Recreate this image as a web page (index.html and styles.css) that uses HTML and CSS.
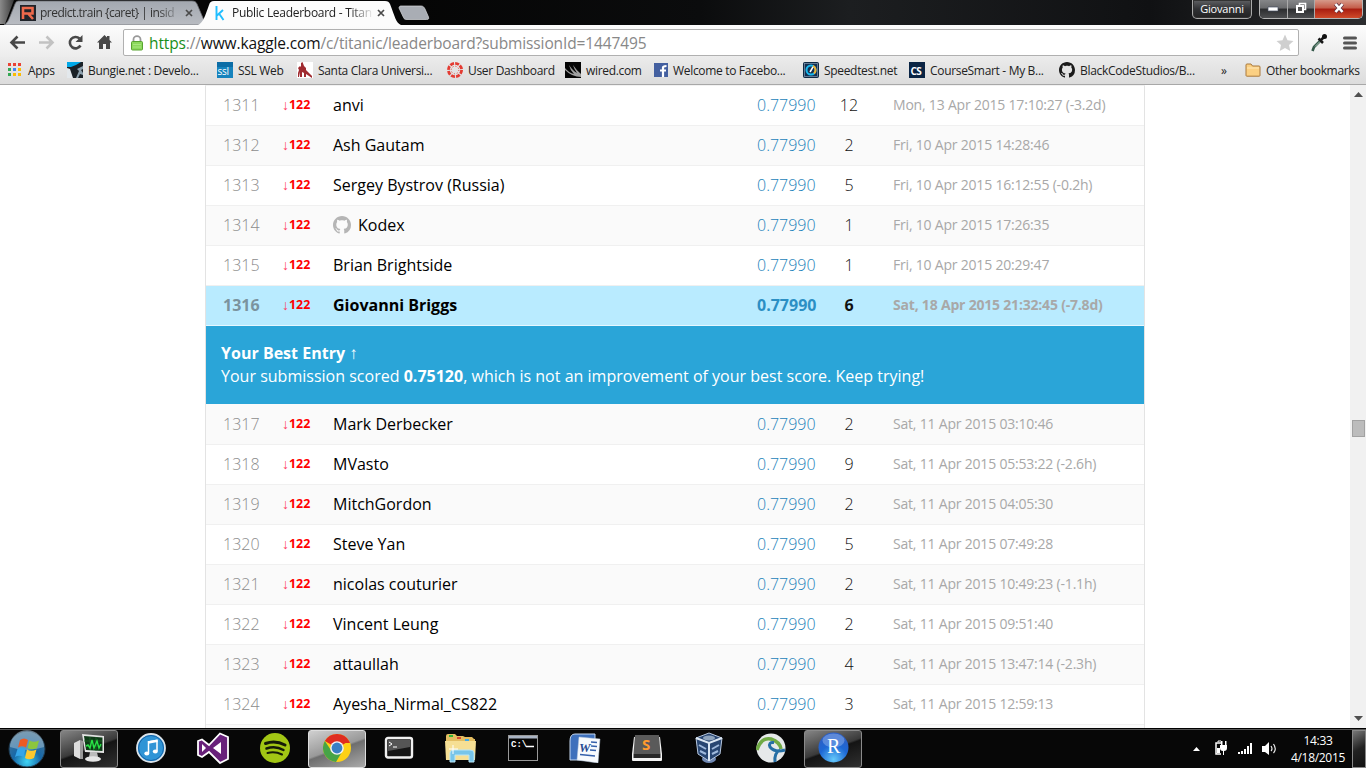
FILE: index.html
```
<!DOCTYPE html>
<html lang="en">
<head>
<meta charset="utf-8">
<title>Public Leaderboard - Titanic</title>
<link rel="stylesheet" href="styles.css">
</head>
<body>
<div class="screen">
<header class="tabstrip">
  <svg class="tabs-art" width="440" height="25" viewBox="0 0 440 25">
    <defs>
      <linearGradient id="tabg" x1="0" y1="0" x2="0" y2="1"><stop offset="0" stop-color="#a3a8b0"/><stop offset="1" stop-color="#b9bcc2"/></linearGradient>
      <linearGradient id="edge" x1="0" y1="0" x2="1" y2="0"><stop offset="0" stop-color="#8a8a8a"/><stop offset="1" stop-color="#3a3a3a"/></linearGradient>
    </defs>
    <path d="M0 0H14L5 24H0z" fill="url(#edge)"/>
    <path d="M4 25C8 23 9 19 15 4C16 1.500 17 1 20 1H192C195 1 196 2 197 4L206 25z" fill="url(#tabg)" stroke="#6d6f73" stroke-width=".8"/>
    <path d="M399 8C399 6.500 400 6 401 6H421C423 6 424 7 425 9L428.500 17C429 19 428.500 19.500 426.500 19.500H407C405 19.500 404 19 403.500 17.500z" fill="#a9adb4" stroke="#d9dadc" stroke-width=".7"/>
    <path d="M198 25C203 23 205 16 209 5C210 2 211 1 214 1H385C388 1 389 2 390 4C395 17 396 23 401 25z" fill="#fcfcfc"/>
  </svg>
  <div class="tab tab-idle">
    <svg width="16" height="16" viewBox="0 0 16 16"><rect width="16" height="16" fill="#20242a"/><path d="M3 14V3H12.500V8.500H3M8.500 9L13 14" fill="none" stroke="#ee6a4c" stroke-width="2.600"/></svg>
    <span class="tab-title">predict.train {caret} | insid</span><svg class="close" width="8" height="8" viewBox="0 0 8 8"><path d="M1 1L7 7M7 1L1 7" stroke="#4a4a4a" stroke-width="1.700"/></svg>
  </div>
  <div class="tab tab-active">
    <svg width="16" height="16" viewBox="0 0 16 16"><path d="M4.500 1V15M11 5L5 10.500M7 8.500L11.500 15" fill="none" stroke="#20beff" stroke-width="1.900"/></svg>
    <span class="tab-title">Public Leaderboard - Titan</span><svg class="close" width="8" height="8" viewBox="0 0 8 8"><path d="M1 1L7 7M7 1L1 7" stroke="#4a4a4a" stroke-width="1.700"/></svg>
  </div>
  <div class="window-buttons">
    <div class="user-button">Giovanni</div>
    <div class="controls">
      <div class="wb"><svg width="12" height="12"><rect x="1" y="5" width="10" height="4" rx=".5" fill="#fff" stroke="#444a60" stroke-width=".7"/></svg></div>
      <div class="wb"><svg width="12" height="12"><path d="M4.500 3V1.500H10.500V7.500H9" fill="none" stroke="#fff" stroke-width="1.600"/><rect x="2" y="4" width="6" height="6" fill="#555" stroke="#fff" stroke-width="2"/></svg></div>
      <div class="wb wb-close"><svg width="14" height="12"><path d="M3.500 2L10.500 10M10.500 2L3.500 10" stroke="#5a3040" stroke-width="4"/><path d="M3.500 2L10.500 10M10.500 2L3.500 10" stroke="#fff" stroke-width="2.600"/></svg></div>
    </div>
  </div>
</header>
<div class="toolbar">
  <svg class="nav" width="112" height="32" viewBox="0 0 112 32">
    <g fill="none" stroke-width="2.600">
      <path d="M25 17.500H12M17.500 11.500L11.500 17.500L17.500 23.500" stroke="#484848"/>
      <path d="M39 17.500H52M46.500 11.500L52.500 17.500L46.500 23.500" stroke="#c2c2c2"/>
      <path d="M80.500 20.500A5.700 5.700 0 1 1 79.500 13.500" stroke="#484848"/>
    </g>
    <path d="M82.500 10V17H75.500z" fill="#484848"/>
    <path d="M97 17.500L104.500 10L107 12.500V11H109.500V15L112 17.500H110V24H106V19H103V24H99V17.500z" fill="#484848"/>
  </svg>
  <div class="omnibox">
    <svg width="14" height="16" viewBox="0 0 14 16"><path d="M3.500 7V4.500A3.500 3.300 0 0 1 10.500 4.500V7" fill="none" stroke="#999" stroke-width="1.800"/><rect x="1.500" y="6.500" width="11" height="8.500" rx="1" fill="#8cd85c" stroke="#58a331"/><path d="M3 9.500H11M3 12H11" stroke="#a8e780"/></svg>
    <span class="url"><span class="scheme">https</span>://<span class="host">www.kaggle.com</span>/c/titanic/leaderboard?submissionId=1447495</span>
    <svg class="star" width="18" height="18" viewBox="0 0 18 18"><path d="M9 .5L11.500 6.300L17.500 6.900L13 11L14.300 17L9 13.900L3.700 17L5 11L.5 6.900L6.500 6.300z" fill="#cfcfcf"/></svg>
  </div>
  <svg class="dropper" width="18" height="20" viewBox="0 0 18 20"><path d="M11 7L4 14L2.500 18" stroke="#35594a" stroke-width="2.600" fill="none"/><path d="M11 7.500L5 13.500" stroke="#a9c4b4" stroke-width="1"/><path d="M8.500 5.500L13 10M11 7L15 3" stroke="#181818" stroke-width="2.500"/><circle cx="14.500" cy="3.500" r="2.500" fill="#111"/></svg>
  <svg class="menu" width="14" height="14"><path d="M1.500 2H12.500M1.500 7H12.500M1.500 12H12.500" stroke="#555" stroke-width="3" stroke-linecap="round"/></svg>
</div>
<nav class="bookmarks">
  <div class="bm b1"><svg width="14" height="14"><g fill="#ea4335"><path d="M0 0h3v3H0zM5 0h3v3H5zM10 0h3v3h-3z"/></g><path d="M0 5h3v3H0z" fill="#34a853"/><path d="M5 5h3v3H5z" fill="#4285f4"/><path d="M10 5h3v3h-3zM5 10h3v3H5zM10 10h3v3h-3z" fill="#fbbc05"/><path d="M0 10h3v3H0z" fill="#34a853"/></svg><span>Apps</span></div>
  <div class="bm b2"><svg width="16" height="16"><rect width="16" height="16" fill="#1b2127"/><path d="M0 0H14L9 3L4 5H0z" fill="#00a8e8"/><path d="M0 6L3 7L6 16H0z" fill="#e3e8ec"/><path d="M9 16L12 9L10 7L16 4V7L14 8L16 11V13L13 12L11 16z" fill="#8da0ad"/></svg><span>Bungie.net : Develo...</span></div>
  <div class="bm b3"><svg width="16" height="16"><rect width="16" height="16" fill="#1683bd"/><rect width="16" height="5" fill="#0c6da6"/><text x="0.500" y="13" class="ssl">ssl</text></svg><span>SSL Web</span></div>
  <div class="bm b4"><svg width="16" height="16"><rect width="16" height="16" fill="#fff"/><path d="M1 6L3 4L4 5V1L5.500 0L7 4L9 6V8L11 10L15 14V16L9 12V15H7V11L5 10V15H3V10L2 15H1V11L2 8z" fill="#a02b30"/></svg><span>Santa Clara Universi...</span></div>
  <div class="bm b5"><svg width="16" height="16"><circle cx="8" cy="8" r="6.600" fill="none" stroke="#e43b32" stroke-width="2.800" stroke-dasharray="4 1.180"/><circle cx="8" cy="8" r="3.800" fill="none" stroke="#e43b32" stroke-width="1" stroke-dasharray="1 1.980"/></svg><span>User Dashboard</span></div>
  <div class="bm b6"><svg width="16" height="16"><rect width="16" height="16" fill="#050505"/><path d="M0 6Q4 11 9 12Q5 8 4 3Q8 9 12 11Q9 7 8 3Q12 9 16 12V15Q7 15 0 8z" fill="#a0a0a0"/></svg><span>wired.com</span></div>
  <div class="bm b7"><svg width="14" height="14"><rect width="14" height="14" fill="#4460a0"/><path d="M9 14V4.500Q9 3 12.500 3M6 7.500H12" fill="none" stroke="#fff" stroke-width="2.200"/></svg><span>Welcome to Facebo...</span></div>
  <div class="bm b8"><svg width="16" height="16"><rect x=".5" y=".5" width="15" height="15" rx="1" fill="#132f50" stroke="#0e2944"/><rect x="1.500" y="1.500" width="13" height="13" fill="none" stroke="#7890a8" stroke-width=".8"/><circle cx="8" cy="8" r="4.500" fill="none" stroke="#19b9ee" stroke-width="2"/><path d="M10 4A4.500 4.500 0 0 1 11 11.500" fill="none" stroke="#f4b02b" stroke-width="2"/><path d="M7 10L10 5" stroke="#fff" stroke-width="1.500"/></svg><span>Speedtest.net</span></div>
  <div class="bm b9"><svg width="16" height="16"><rect width="16" height="16" fill="#0b2545"/><text x="1.500" y="12.500" class="cs">CS</text></svg><span>CourseSmart - My B...</span></div>
  <div class="bm b10"><svg width="16" height="16" viewBox="0 0 16 16"><path class="gh-dark" d="M8 0C3.580 0 0 3.580 0 8c0 3.540 2.290 6.530 5.470 7.590.4.070.55-.17.55-.38 0-.19-.01-.82-.01-1.490-2.010.37-2.530-.49-2.690-.94-.09-.23-.48-.94-.82-1.130-.28-.15-.68-.52-.01-.53.63-.01 1.080.58 1.230.82.72 1.210 1.870.87 2.330.66.07-.52.28-.87.51-1.070-1.780-.2-3.640-.89-3.640-3.950 0-.87.31-1.590.82-2.150-.08-.2-.36-1.020.08-2.120 0 0 .67-.21 2.200.82.64-.18 1.320-.27 2-.27s1.360.09 2 .27c1.530-1.040 2.200-.82 2.200-.82.44 1.100.16 1.920.08 2.120.51.56.82 1.270.82 2.150 0 3.070-1.870 3.750-3.650 3.950.29.25.54.73.54 1.480 0 1.070-.01 1.930-.01 2.200 0 .21.15.46.55.38A8.010 8.010 0 0 0 16 8c0-4.420-3.580-8-8-8z"/></svg><span>BlackCodeStudios/B...</span></div>
  <div class="bm b11"><span>»</span></div>
  <div class="bm b12"><svg width="16" height="14"><path d="M1 12.500V2Q1 1 2 1H6L7.500 3H14Q15 3 15 4V12.500Q15 13.200 14 13.200H2Q1 13.200 1 12.500z" fill="#fbd083" stroke="#a9793c"/><path d="M2 5H14" stroke="#ffe8b8"/></svg><span>Other bookmarks</span></div>
</nav>
<main class="page">
  <div class="board">
    <div class="row"><span class="rank">1311</span><span class="delta"><i>↓</i>122</span><span class="name">anvi</span><span class="score">0.77990</span><span class="entries">12</span><span class="when">Mon, 13 Apr 2015 17:10:27 (-3.2d)</span></div>
    <div class="row alt"><span class="rank">1312</span><span class="delta"><i>↓</i>122</span><span class="name">Ash Gautam</span><span class="score">0.77990</span><span class="entries">2</span><span class="when">Fri, 10 Apr 2015 14:28:46</span></div>
    <div class="row"><span class="rank">1313</span><span class="delta"><i>↓</i>122</span><span class="name">Sergey Bystrov (Russia)</span><span class="score">0.77990</span><span class="entries">5</span><span class="when">Fri, 10 Apr 2015 16:12:55 (-0.2h)</span></div>
    <div class="row alt"><span class="rank">1314</span><span class="delta"><i>↓</i>122</span><span class="name"><svg class="gh" width="18" height="18" viewBox="0 0 16 16"><path d="M8 0C3.580 0 0 3.580 0 8c0 3.540 2.290 6.530 5.470 7.590.4.070.55-.17.55-.38 0-.19-.01-.82-.01-1.490-2.010.37-2.530-.49-2.690-.94-.09-.23-.48-.94-.82-1.130-.28-.15-.68-.52-.01-.53.63-.01 1.080.58 1.230.82.72 1.210 1.870.87 2.330.66.07-.52.28-.87.51-1.070-1.780-.2-3.640-.89-3.640-3.950 0-.87.31-1.590.82-2.150-.08-.2-.36-1.020.08-2.120 0 0 .67-.21 2.200.82.64-.18 1.320-.27 2-.27s1.360.09 2 .27c1.530-1.040 2.200-.82 2.200-.82.44 1.100.16 1.920.08 2.120.51.56.82 1.270.82 2.150 0 3.070-1.870 3.750-3.650 3.950.29.25.54.73.54 1.480 0 1.070-.01 1.930-.01 2.200 0 .21.15.46.55.38A8.010 8.010 0 0 0 16 8c0-4.420-3.580-8-8-8z"/></svg>Kodex</span><span class="score">0.77990</span><span class="entries">1</span><span class="when">Fri, 10 Apr 2015 17:26:35</span></div>
    <div class="row"><span class="rank">1315</span><span class="delta"><i>↓</i>122</span><span class="name">Brian Brightside</span><span class="score">0.77990</span><span class="entries">1</span><span class="when">Fri, 10 Apr 2015 20:29:47</span></div>
    <div class="row me"><span class="rank">1316</span><span class="delta"><i>↓</i>122</span><span class="name">Giovanni Briggs</span><span class="score">0.77990</span><span class="entries">6</span><span class="when">Sat, 18 Apr 2015 21:32:45 (-7.8d)</span></div>
    <div class="banner"><p><b>Your Best Entry <span class="up">↑</span></b></p><p>Your submission scored <b>0.75120</b>, which is not an improvement of your best score. Keep trying!</p></div>
    <div class="row alt"><span class="rank">1317</span><span class="delta"><i>↓</i>122</span><span class="name">Mark Derbecker</span><span class="score">0.77990</span><span class="entries">2</span><span class="when">Sat, 11 Apr 2015 03:10:46</span></div>
    <div class="row"><span class="rank">1318</span><span class="delta"><i>↓</i>122</span><span class="name">MVasto</span><span class="score">0.77990</span><span class="entries">9</span><span class="when">Sat, 11 Apr 2015 05:53:22 (-2.6h)</span></div>
    <div class="row alt"><span class="rank">1319</span><span class="delta"><i>↓</i>122</span><span class="name">MitchGordon</span><span class="score">0.77990</span><span class="entries">2</span><span class="when">Sat, 11 Apr 2015 04:05:30</span></div>
    <div class="row"><span class="rank">1320</span><span class="delta"><i>↓</i>122</span><span class="name">Steve Yan</span><span class="score">0.77990</span><span class="entries">5</span><span class="when">Sat, 11 Apr 2015 07:49:28</span></div>
    <div class="row alt"><span class="rank">1321</span><span class="delta"><i>↓</i>122</span><span class="name">nicolas couturier</span><span class="score">0.77990</span><span class="entries">2</span><span class="when">Sat, 11 Apr 2015 10:49:23 (-1.1h)</span></div>
    <div class="row"><span class="rank">1322</span><span class="delta"><i>↓</i>122</span><span class="name">Vincent Leung</span><span class="score">0.77990</span><span class="entries">2</span><span class="when">Sat, 11 Apr 2015 09:51:40</span></div>
    <div class="row alt"><span class="rank">1323</span><span class="delta"><i>↓</i>122</span><span class="name">attaullah</span><span class="score">0.77990</span><span class="entries">4</span><span class="when">Sat, 11 Apr 2015 13:47:14 (-2.3h)</span></div>
    <div class="row"><span class="rank">1324</span><span class="delta"><i>↓</i>122</span><span class="name">Ayesha_Nirmal_CS822</span><span class="score">0.77990</span><span class="entries">3</span><span class="when">Sat, 11 Apr 2015 12:59:13</span></div>
    <div class="row alt"></div>
  </div>
  <div class="scrollbar">
    <svg width="9" height="5"><path d="M0 5L4.500 0L9 5z" fill="#505050"/></svg>
    <div class="thumb"></div>
    <svg width="9" height="5"><path d="M0 0L4.500 5L9 0z" fill="#505050"/></svg>
  </div>
</main>
<footer class="taskbar">
  <div class="start"><svg width="38" height="38" viewBox="0 0 38 38">
    <defs><radialGradient id="orb" cx=".5" cy=".85" r=".85"><stop offset="0" stop-color="#3fd5f5"/><stop offset=".45" stop-color="#1768a8"/><stop offset="1" stop-color="#4c7590"/></radialGradient></defs>
    <circle cx="19" cy="19" r="18" fill="url(#orb)" stroke="#20394d"/><path d="M2 17A17 17 0 0 1 36 17Q19 23 2 17z" fill="#c3d8e4" opacity=".4"/>
    <path d="M12 10Q16 7 20 10L18 17.500Q14 15 10 17.500z" fill="#ee5a24"/><path d="M21.500 10.500Q26 13 31 10.500L29 18Q24 20.500 19.500 18z" fill="#8cc63e"/><path d="M9.500 19Q13.500 16.500 17.500 19L15.500 27Q11 24.500 7 27z" fill="#35a5e8"/><path d="M19 19.500Q23 22 28.500 19.500L26 28Q21 30.500 17 28z" fill="#fdc82f"/></svg></div>
  <div class="task open"><svg width="32" height="30" viewBox="0 0 32 30"><path d="M1 10L7 7V26L1 23z" fill="#ddd"/><path d="M7 7L10 8V26H7z" fill="#999"/><path d="M9 1L31 3V20L12 19z" fill="#e3e3e3"/><path d="M11 3L29.500 4.500V18L13 17z" fill="#0e3a17"/><path d="M11 8H29M12 13H29M17 4V17M23 4V18" stroke="#1e702a" stroke-width=".7"/><path d="M13 13L15 12L17 15L19 7L21 15L24 8L26 15L28 11" stroke="#28e245" fill="none" stroke-width="1.400"/><path d="M17 19H24L25 24H16z" fill="#bbb"/><ellipse cx="20" cy="26" rx="8" ry="2.800" fill="#e6e6e6"/></svg></div>
  <div class="task"><svg width="30" height="30" viewBox="0 0 30 30"><circle cx="15" cy="15" r="14" fill="#2f94d6" stroke="#dbe3e9" stroke-width="1.800"/><circle cx="15" cy="15" r="12.500" fill="none" stroke="#1563a8"/><path d="M12.500 20V9L21 7.500V18" fill="none" stroke="#fff" stroke-width="1.500"/><path d="M12 9.500L21.500 7.800" stroke="#fff" stroke-width="2.600"/><ellipse cx="10.800" cy="20.500" rx="2.500" ry="2" fill="#fff"/><ellipse cx="19.300" cy="18.500" rx="2.500" ry="2" fill="#fff"/></svg></div>
  <div class="task"><svg width="34" height="32" viewBox="0 0 34 32"><path d="M2 9L6 7.500L13 13L24 1.500L32 5V27L24 31L13 20L6 25L2 23z" fill="#68217a" stroke="#fff" stroke-width="1.800"/><path d="M6 12V20L10 16zM17 16L25 22V10z" fill="#fff"/></svg></div>
  <div class="task"><svg width="30" height="30" viewBox="0 0 30 30"><circle cx="15" cy="15" r="15" fill="#a2c614"/><g fill="none" stroke="#151b08" stroke-linecap="round"><path d="M5.500 10.500Q15.500 7 25 12" stroke-width="3"/><path d="M6.500 15.500Q15.500 12.500 23.500 17" stroke-width="2.500"/><path d="M7.500 20Q15 18 22 21.500" stroke-width="2"/></g></svg></div>
  <div class="task open focus"><svg width="28" height="28" viewBox="0 0 28 28"><circle cx="14" cy="14" r="14" fill="#fcd116"/><path d="M14 14L1.870 7A14 14 0 0 1 26.120 7z" fill="#df2c20"/><path d="M1.870 7A14 14 0 0 0 13 28L19.500 17L8.500 17z" fill="#47a447"/><path d="M14 7H26.120L27 9H14z" fill="#df2c20"/><circle cx="14" cy="14" r="6.800" fill="#f4f4f4"/><circle cx="14" cy="14" r="5.400" fill="#397fc4"/></svg></div>
  <div class="task"><svg width="30" height="24" viewBox="0 0 30 24"><rect x="2" y="2" width="26" height="19.500" rx="2" fill="#161616" stroke="#f0f0f0" stroke-width="2.400"/><path d="M4 4H26V11L4 15z" fill="#555"/><path d="M5 6L8 8L5 10M9 11H13" fill="none" stroke="#fff"/></svg></div>
  <div class="task"><svg width="34" height="30" viewBox="0 0 34 30"><path d="M2 3Q2 1 4 1H11L13 3H19L21 4H28L30 6H31V26H2z" fill="#e3bd61"/><path d="M5 2H9V4H5z" fill="#2fb637"/><path d="M13 4H17V6H13z" fill="#d54a32"/><path d="M21 6H25V8H21z" fill="#3faaea"/><path d="M1 8H32L31 27H2z" fill="#f6df94"/><path d="M6 29V20Q6 17 10 17H26Q30 17 30 20V29H25V22H11V29z" fill="#78c5e9" stroke="#b9e5f6"/><path d="M9 12V21M5 16H14" stroke="#fff" stroke-width="1"/></svg></div>
  <div class="task"><svg width="30" height="26" viewBox="0 0 30 26"><rect x=".5" y=".5" width="29" height="25" fill="#050505" stroke="#999"/><path d="M1 1H29V3.500H1z" fill="#aab4c4"/><text x="3" y="12" class="cmd">C:\</text><path d="M18 11.500H26" stroke="#fff" stroke-width="1.500"/></svg></div>
  <div class="task"><svg width="32" height="30" viewBox="0 0 32 30"><path d="M6 1H26V27H1V8Q1 1 6 1z" fill="#3e70bc" stroke="#c4d7ef"/><path d="M10 4L31 6L29 30L8 27z" fill="#f7fafd" stroke="#b9c8dd" stroke-width=".5"/><path d="M22 9L28 9.500M22 13L28 13.500M21 17L27 17.500M11 21.500L26 23" stroke="#3560aa" stroke-width="1.500"/><text x="10" y="19" class="word">W</text></svg></div>
  <div class="task"><svg width="30" height="28" viewBox="0 0 30 28"><path d="M2 3H28L30 20V26Q30 27 29 27H1Q0 27 0 26V20z" fill="#f4f4f4"/><path d="M3 1H27L28.500 20H1.500z" fill="#5a5a5a"/><path d="M1.500 20H28.500V24H1.500z" fill="#292929"/><text x="10" y="16" class="subl">S</text></svg></div>
  <div class="task"><svg width="28" height="32" viewBox="0 0 28 32"><ellipse cx="14" cy="27" rx="7" ry="4" fill="#6f87b2"/><path d="M1 6L14 1L27 6L25 22L14 29L3 22z" fill="#284672" stroke="#b8c9e1"/><path d="M1 6L14 11L27 6M14 11V29" fill="none" stroke="#dce7f3" stroke-width="2"/><path d="M4 13L11 17M5 19L11 22M24 13L17 17M23 19L17 22" fill="none" stroke="#9fb9dc" stroke-width="2"/><ellipse cx="14" cy="6" rx="6" ry="2.500" fill="#8da3bd"/></svg></div>
  <div class="task"><svg width="30" height="30" viewBox="0 0 30 30"><circle cx="15" cy="15" r="14.500" fill="#e6e9ea"/><path d="M1 17Q5 4 15 6Q24 9 25 16" fill="none" stroke="#70aa45" stroke-width="3.500"/><path d="M29 17Q19 20 14 14Q12 9 18 9.500M19 29Q18 20 24 17" fill="none" stroke="#256fa5" stroke-width="3"/></svg></div>
  <div class="task open"><svg width="31" height="31" viewBox="0 0 31 31"><defs><radialGradient id="rg" cx=".5" cy=".9" r=".8"><stop offset="0" stop-color="#65c9fa"/><stop offset=".6" stop-color="#1d68d5"/><stop offset="1" stop-color="#2b5fc5"/></radialGradient></defs><circle cx="15.500" cy="15.500" r="15" fill="url(#rg)"/><ellipse cx="15.500" cy="8.500" rx="11" ry="7" fill="#9ebcf0" opacity=".45"/><text x="9" y="21" class="rstudio">R</text></svg></div>
  <div class="tray">
    <svg width="90" height="20" viewBox="0 0 90 20"><path d="M0 12L3.500 8L7 12z" fill="#fff"/><path d="M28 4H23V15H28" fill="none" stroke="#fff" stroke-width="1.500"/><path d="M25 3V2H28" stroke="#fff" fill="none"/><path d="M24 9H27V14H24z" fill="#fff"/><path d="M27 6H34V9Q34 12 31 12V16H30V12Q27 12 27 9zM28 2H29.500V6H28zM32 2H33.500V6H32z" fill="#fff"/><path d="M45 13h2v2h-2zM48 12h2v3h-2zM51 10h2v5h-2zM54 7h2v8h-2zM57 4h2v11h-2z" fill="#fff"/><path d="M69 7H72L76 3V16L72 13H69z" fill="#fff"/><path d="M78 7Q80 10 78 12M80.500 5Q84 10 80.500 14" fill="none" stroke="#eee" stroke-width="1.200"/></svg>
    <div class="clock"><span>14:33</span><span>4/18/2015</span></div>
    <div class="peek"></div>
  </div>
</footer>
</div>
</body>
</html>
```
FILE: styles.css
```
* { box-sizing: border-box; }
body { margin: 0; font-family: "Open Sans", sans-serif; }
svg { display: block; flex: none; }
p { margin: 0; }
.screen { width: 1366px; height: 768px; overflow: hidden; display: flex; flex-direction: column; background: #fff; }

.tabstrip { position: relative; height: 25px; flex: none; display: flex; background: linear-gradient(90deg, #050505 0 400px, #0b0c0d 700px, #1c1e20 850px, #101113 1150px, #2c2d2f 1366px); color: #333; font-size: 12px; }
.tabs-art { position: absolute; left: 0; top: 0; }
.tab { position: relative; display: flex; align-items: center; height: 25px; }
.tab-idle { width: 195px; padding-left: 20px; }
.tab-active { width: 205px; padding-left: 17px; color: #222; }
.tab-title { width: 145px; margin-left: 4px; margin-right: -7px; white-space: nowrap; letter-spacing: -0.5px; -webkit-mask-image: linear-gradient(90deg, #000 118px, transparent 142px); mask-image: linear-gradient(90deg, #000 118px, transparent 142px); }
.tab-active .tab-title { letter-spacing: -0.28px; }
.close { margin-left: 7px; }
.window-buttons { margin-left: auto; display: flex; align-items: flex-start; padding-right: 3px; gap: 7px; }
.user-button { width: 60px; height: 19px; border: 1px solid #aaa; border-top: 0; border-radius: 0 0 5px 5px; background: linear-gradient(#606164, #303134 50%, #222); box-shadow: inset 0 0 0 1px #333; color: #fff; font-size: 11px; line-height: 17px; text-align: center; letter-spacing: -0.2px; }
.controls { display: flex; width: 104px; height: 19px; border: 1px solid #b5b5b5; border-top: 0; border-radius: 0 0 5px 5px; overflow: hidden; }
.wb { display: flex; align-items: center; justify-content: center; width: 28px; height: 18px; padding-bottom: 2px; background: linear-gradient(#858688, #6a6b6d 45%, #2c2d2f 50%, #4d4e50); border-right: 1px solid #aaa; }
.wb-close { width: 47px; border: 0; background: linear-gradient(#d69a8a, #c45b48 45%, #a81d10 50%, #cf4a2a); }

.toolbar { height: 32px; flex: none; display: flex; align-items: center; background: linear-gradient(#fcfcfc, #ececec); }
.omnibox { width: 1176px; height: 27px; margin-left: 11px; margin-top: 3px; display: flex; align-items: center; padding: 0 4px 0 6px; border: 1px solid #b0b0b0; border-radius: 2px; background: #fff; }
.url { margin-left: 5px; color: #888; font-size: 15.500px; letter-spacing: -0.13px; white-space: nowrap; }
.scheme { color: #1a8f1a; }
.host { color: #111; }
.star { margin-left: auto; }
.dropper { margin-left: 11px; margin-top: 3px; }
.menu { margin-left: 15px; margin-top: 3px; }

.bookmarks { height: 28px; flex: none; display: grid; align-items: center; grid-template-columns: 59px 150px 80px 150px 118px 89px 149px 106px 150px 162px 24px 1fr; padding-left: 8px; padding-bottom: 1px; background: linear-gradient(#ebebeb, #dcdcdc); border-bottom: 1px solid #a8a8a8; color: #222; font-size: 12px; white-space: nowrap; }
.bm { display: flex; align-items: center; gap: 5px; letter-spacing: -0.32px; }
.b1 { gap: 6px; }
.ssl { font: 10px "Open Sans", sans-serif; fill: #fff; }
.cs { font: bold 10px "Open Sans", sans-serif; fill: #fff; letter-spacing: -0.5px; }
.gh-dark { fill: #1b1b1b; }

.page { height: 643px; flex: none; display: flex; overflow: hidden; }
.board { width: 940px; margin-left: 205px; border: 1px solid #e3e3e3; border-top-color: #f2f2f2; border-bottom: 0; flex: none; height: 660px; }
.row { height: 40px; display: grid; grid-template-columns: 59px 51px 424px 82px 54px 1fr; align-items: center; padding-left: 17px; padding-bottom: 2px; border-bottom: 1px solid #f0f0f0; font-size: 16px; line-height: 22px; }
.alt { background: #fafafa; }
.me { background: #b9ebff; font-weight: 700; border-bottom-color: #e6f7ff; }
.rank { color: #8c8c8c; font-weight: 300; }
.delta { color: #f00; font-size: 12.400px; font-weight: 700; display: flex; align-items: center; padding-top: 1px; }
.delta i { width: 7px; font: 400 14px/14px "Liberation Sans", sans-serif; color: #ff4060; }
.name { display: flex; align-items: center; color: #000; }
.gh { margin-right: 7px; fill: #b5b5b5; }
.score { color: #1c83ba; font-weight: 300; }
.entries { color: #111; font-weight: 300; width: 20px; text-align: center; }
.when { color: #a8a8a8; font-size: 14px; letter-spacing: -0.2px; }
.me .rank, .me .score, .me .entries { font-weight: 700; }
.me .rank { color: #7b939e; }
.me .score { color: #2b8fc4; }
.me .when { letter-spacing: -0.2px; }
.banner { height: 79px; padding: 16px 15px; background: #2aa5d8; border-bottom: 1px solid #fafafa; color: #fff; font-size: 16px; line-height: 23px; letter-spacing: 0.01px; }
.up { font: 400 17px/16px "Liberation Sans", sans-serif; }
.scrollbar { width: 16px; margin-left: auto; display: flex; flex-direction: column; align-items: center; background: #f1f1f1; padding: 7px 0; }
.thumb { width: 13px; height: 17px; margin-top: 323px; margin-bottom: auto; background: #bcbcbc; border: 1px solid #a2a2a2; }

.taskbar { height: 40px; flex: none; display: flex; align-items: center; border-top: 1px solid #000; box-shadow: inset 0 1px #555; background: #070707; }
.start { width: 60px; padding-left: 8px; }
.task { width: 58px; height: 38px; margin-right: 4px; display: flex; align-items: center; justify-content: center; border-radius: 3px; padding-bottom: 2px; }
.open { border: 1px solid #8a8a8a; background: linear-gradient(160deg, #858585, #3a3a3a 48%, #141414 52%, #303030); }
.focus { border-color: #ddd; background: linear-gradient(160deg, #d0d0d0, #999 48%, #6e6e6e 52%, #aaa); }
.cmd { font: bold 9px "Liberation Mono", monospace; fill: #fff; }
.word { font: italic bold 13px "Liberation Serif", serif; fill: #274b93; }
.subl { font: bold 15px "Open Sans", sans-serif; fill: #ff9a2e; }
.rstudio { font: 20px "Liberation Serif", serif; fill: #fff; }
.tray { margin-left: auto; display: flex; align-items: center; color: #fff; }
.clock { width: 68px; margin-left: 1px; display: flex; flex-direction: column; align-items: center; font-size: 12px; line-height: 17px; letter-spacing: -0.3px; }
.peek { width: 14px; height: 38px; border: 1px solid #888; background: linear-gradient(150deg, #777, #222 50%, #111); }
```
